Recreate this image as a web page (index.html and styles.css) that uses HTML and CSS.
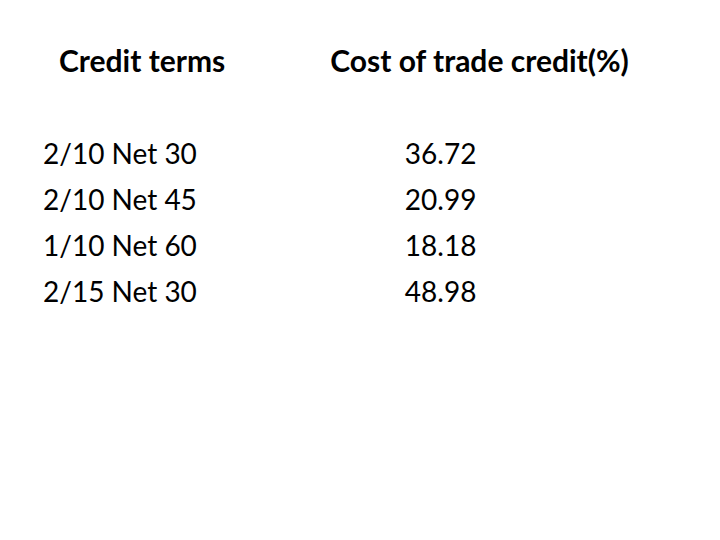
FILE: index.html
```html
<!DOCTYPE html>
<html>
<head>
<meta charset="utf-8">
<link rel="stylesheet" href="styles.css">
</head>
<body>
<div class="slide">
  <div class="head">
    <div class="h1">Credit terms</div>
    <div class="h2">Cost of trade credit(%)</div>
  </div>
  <div class="rows">
    <div class="terms">
      <div>2/10 Net 30</div>
      <div>2/10 Net 45</div>
      <div>1/10 Net 60</div>
      <div>2/15 Net 30</div>
    </div>
    <div class="costs">
      <div>36.72</div>
      <div>20.99</div>
      <div>18.18</div>
      <div>48.98</div>
    </div>
  </div>
</div>
</body>
</html>
```
FILE: styles.css
```css
html, body { margin: 0; padding: 0; background: #fff; }
.slide {
  width: 720px; height: 540px;
  font-family: Lato, "Open Sans", sans-serif;
  color: #000;
}
.head {
  display: flex;
  padding-top: 43px;
  font-weight: bold;
  font-size: 30px;
  line-height: 34px;
}
.h1 { margin-left: 59px; }
.h2 { margin-left: 105px; }
.rows {
  display: flex;
  padding-top: 53px;
  font-size: 28px;
  line-height: 46px;
}
.terms { margin-left: 43px; }
.costs { margin-left: 208px; }
```
